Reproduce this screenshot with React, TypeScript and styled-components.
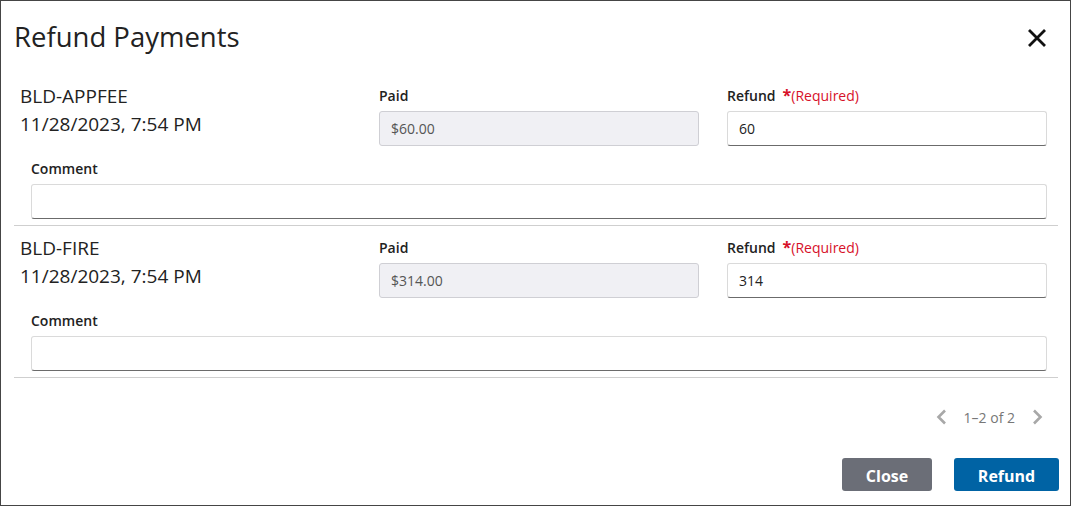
import React from "react";
import styled, { createGlobalStyle } from "styled-components";

const Global = createGlobalStyle`
  html, body { margin: 0; padding: 0; background: #fff; }
  body { font-family: "Open Sans", "Noto Sans", sans-serif; color: #222; }
  * { box-sizing: border-box; }
`;

const Dialog = styled.div`
  width: 1071px;
  height: 506px;
  border: 1px solid #454545;
  background: #fff;
  display: flex;
  flex-direction: column;
`;

const Header = styled.div`
  height: 73px;
  display: flex;
  align-items: center;
  justify-content: space-between;
  padding: 0 23px 0 13px;
`;

const Title = styled.h1`
  margin: 0;
  font-size: 27.5px;
  font-weight: 400;
  line-height: 36px;
  color: #222;
  position: relative;
  top: -1px;
`;

const CloseIcon = styled.button`
  border: none;
  background: none;
  padding: 0;
  width: 20px;
  height: 20px;
  display: flex;
  align-items: center;
  justify-content: center;
  cursor: pointer;
`;

const Body = styled.div`
  padding: 0 12px 0 13px;
`;

const Row = styled.div`
  padding: 12px 0 6px;
  border-bottom: 1px solid #cfcfcf;
`;

const TopGrid = styled.div`
  display: grid;
  grid-template-columns: 1fr 320px 320px;
  column-gap: 28px;
  padding-right: 11px;
`;

const NameBlock = styled.div`
  padding-left: 6px;
  font-size: 19px;
  line-height: 28px;
  color: #222;
  margin-top: -4px;
`;

const Field = styled.div`
  display: flex;
  flex-direction: column;
`;

const Label = styled.label`
  display: block;
  height: 20px;
  font-family: "Open Sans SemiBold", "Open Sans", sans-serif;
  font-size: 14px;
  font-weight: 600;
  line-height: 20px;
  color: #222;
  margin-bottom: 5px;
`;

const Req = styled.span`
  font-family: "Open Sans", sans-serif;
  color: #d7102a;
  font-weight: 400;
  margin-left: 7px;
`;

const Star = styled.span`
  font-size: 16px;
  line-height: 0;
  font-weight: 700;
`;

const Input = styled.input<{ $readOnly?: boolean }>`
  height: 35px;
  width: 100%;
  border: 1px solid ${(p) => (p.$readOnly ? "#cfcfd4" : "#dadada")};
  border-bottom: 1px solid ${(p) => (p.$readOnly ? "#cfcfd4" : "#6b6b6b")};
  border-radius: 3px;
  background: ${(p) => (p.$readOnly ? "#f0f0f4" : "#fff")};
  padding: 0 11px;
  font-family: "Open Sans", sans-serif;
  font-size: 14px;
  color: ${(p) => (p.$readOnly ? "#555" : "#222")};
  outline: none;
`;

const CommentBlock = styled.div`
  margin-top: 13px;
  padding: 0 11px 0 17px;
  display: flex;
  flex-direction: column;
`;

const Pager = styled.div`
  display: flex;
  justify-content: flex-end;
  align-items: center;
  gap: 17px;
  padding: 0 27px 0 0;
  margin-top: 28px;
  height: 22px;
  font-size: 14px;
  color: #777;
`;

const PagerBtn = styled.button`
  border: none;
  background: none;
  padding: 0;
  display: flex;
  align-items: center;
  cursor: pointer;
`;

const Footer = styled.div`
  margin-top: auto;
  display: flex;
  justify-content: flex-end;
  gap: 22px;
  padding: 0 11px 14px 0;
`;

const Btn = styled.button<{ $primary?: boolean }>`
  height: 33px;
  width: ${(p) => (p.$primary ? "105px" : "90px")};
  border: none;
  border-radius: 3px;
  background: ${(p) => (p.$primary ? "#0063a4" : "#6b6e77")};
  color: #fff;
  font-family: "Open Sans", sans-serif;
  font-weight: 700;
  font-size: 16px;
  padding: 2px 0 0;
  cursor: pointer;
`;

const Chevron = ({ dir }: { dir: "left" | "right" }) => (
  <svg width="11" height="16" viewBox="0 0 11 16">
    <path
      d={dir === "left" ? "M9 1.5 L2.5 8 L9 14.5" : "M2 1.5 L8.5 8 L2 14.5"}
      fill="none"
      stroke="#a8a8a8"
      strokeWidth="2.6"
    />
  </svg>
);

const payments = [
  { code: "BLD-APPFEE", date: "11/28/2023, 7:54 PM", paid: "$60.00", refund: "60" },
  { code: "BLD-FIRE", date: "11/28/2023, 7:54 PM", paid: "$314.00", refund: "314" },
];

export default function App() {
  return (
    <>
      <Global />
      <Dialog>
        <Header>
          <Title>Refund Payments</Title>
          <CloseIcon aria-label="Close">
            <svg width="20" height="20" viewBox="0 0 20 20">
              <path d="M2 2 L18 18 M18 2 L2 18" stroke="#111" strokeWidth="2.8" />
            </svg>
          </CloseIcon>
        </Header>
        <Body>
          {payments.map((p) => (
            <Row key={p.code}>
              <TopGrid>
                <NameBlock>
                  <div>{p.code}</div>
                  <div>{p.date}</div>
                </NameBlock>
                <Field>
                  <Label>Paid</Label>
                  <Input $readOnly readOnly value={p.paid} />
                </Field>
                <Field>
                  <Label>
                    Refund
                    <Req>
                      <Star>*</Star>(Required)
                    </Req>
                  </Label>
                  <Input readOnly value={p.refund} />
                </Field>
              </TopGrid>
              <CommentBlock>
                <Label>Comment</Label>
                <Input readOnly value="" />
              </CommentBlock>
            </Row>
          ))}
        </Body>
        <Pager>
          <PagerBtn aria-label="Previous">
            <Chevron dir="left" />
          </PagerBtn>
          <span>1–2 of 2</span>
          <PagerBtn aria-label="Next">
            <Chevron dir="right" />
          </PagerBtn>
        </Pager>
        <Footer>
          <Btn>Close</Btn>
          <Btn $primary>Refund</Btn>
        </Footer>
      </Dialog>
    </>
  );
}
